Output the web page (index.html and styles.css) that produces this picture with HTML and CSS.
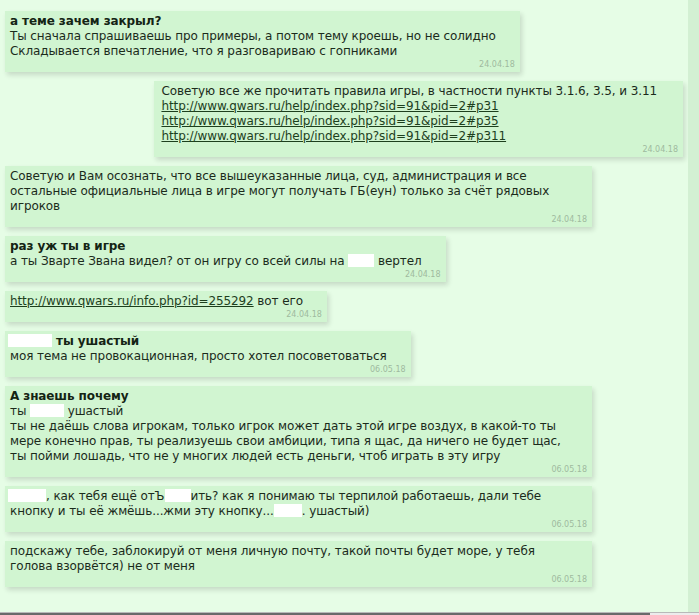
FILE: index.html
```html
<!DOCTYPE html>
<html>
<head>
    <title>Сообщения</title>
    <link rel="stylesheet" href="styles.css">
</head>
<body>
    <div class="page">
        <div class="chat">
            <div class="msg">
                <b>а теме зачем закрыл?</b><br>
                Ты сначала спрашиваешь про примеры, а потом тему кроешь, но не солидно<br>
                Складывается впечатление, что я разговариваю с гопниками
                <div class="date">24.04.18</div>
            </div>

            <div class="msg mine">
                Советую все же прочитать правила игры, в частности пункты 3.1.6, 3.5, и 3.11<br>
                <a href="#">http://www.qwars.ru/help/index.php?sid=91&amp;pid=2#p31</a><br>
                <a href="#">http://www.qwars.ru/help/index.php?sid=91&amp;pid=2#p35</a><br>
                <a href="#">http://www.qwars.ru/help/index.php?sid=91&amp;pid=2#p311</a>
                <div class="date">24.04.18</div>
            </div>

            <div class="msg">
                Советую и Вам осознать, что все вышеуказанные лица, суд, администрация и все остальные официальные лица в игре могут получать ГБ(еун) только за счёт рядовых игроков
                <div class="date">24.04.18</div>
            </div>

            <div class="msg">
                <b>раз уж ты в игре</b><br>
                а ты Зварте Звана видел? от он игру со всей силы на <span class="blot w26"></span> вертел
                <div class="date">24.04.18</div>
            </div>

            <div class="msg">
                <a href="#">http://www.qwars.ru/info.php?id=255292</a> вот его
                <div class="date">24.04.18</div>
            </div>

            <div class="msg">
                <b><span class="blot w44 lead"></span> ты ушастый</b><br>
                моя тема не провокационная, просто хотел посоветоваться
                <div class="date">06.05.18</div>
            </div>

            <div class="msg">
                <b>А знаешь почему</b><br>
                ты <span class="blot w34"></span> ушастый<br>
                ты не даёшь слова игрокам, только игрок может дать этой игре воздух, в какой-то ты мере конечно прав, ты реализуешь свои амбиции, типа я щас, да ничего не будет щас, ты пойми лошадь, что не у многих людей есть деньги, чтоб играть в эту игру
                <div class="date">06.05.18</div>
            </div>

            <div class="msg">
                <span class="blot w38 lead"></span>, как тебя ещё отЪ<span class="blot w26"></span>ить? как я понимаю ты терпилой работаешь, дали тебе кнопку и ты её жмёшь...жми эту кнопку...<span class="blot w28"></span>. ушастый)
                <div class="date">06.05.18</div>
            </div>

            <div class="msg">
                подскажу тебе, заблокируй от меня личную почту, такой почты будет море, у тебя голова взорвётся) не от меня
                <div class="date">06.05.18</div>
            </div>
        </div>
        <div class="rail"></div>
    </div>
    <div class="hscroll"><div class="thumb"></div></div>
</body>
</html>
```
FILE: styles.css
```css
body {
    margin: 0;
    background: #e6fde6;
    font-family: "DejaVu Sans", Verdana, sans-serif;
    font-size: 12px;
    line-height: 15px;
    letter-spacing: -0.1px;
    color: #1b2b1b;
    overflow: hidden;
}
.page {
    display: flex;
    height: 612px;
}
.chat {
    width: 688px;
    display: flex;
    flex-direction: column;
    align-items: flex-start;
    gap: 9px;
    padding-top: 11px;
}
.rail {
    width: 11px;
    background: #d3f0d3;
}
.msg {
    max-width: 558px;
    margin-left: 5px;
    padding: 3px 24px 2px 5px;
    background: #d1f5d1;
    box-shadow: 2px 3px 5px rgba(0,0,0,0.14);
}
.msg.mine {
    align-self: flex-end;
    margin-right: 5px;
    padding-left: 7px;
    padding-right: 26px;
}
.msg b { color: #142414; }
.msg a { color: #1d3f1d; }
.date {
    margin-right: -19px;
    text-align: right;
    font-size: 8px;
    line-height: 11px;
    letter-spacing: 0;
    color: #9fba9f;
}
.mine .date { margin-right: -21px; }
.blot {
    display: inline-block;
    height: 13px;
    vertical-align: -2px;
    background: #fff;
}
.blot.lead { margin-left: -2px; }
.w26 { width: 26px; }
.w28 { width: 28px; }
.w34 { width: 34px; }
.w38 { width: 38px; }
.w44 { width: 44px; }
.hscroll {
    height: 3px;
    border-top: 1px solid #b9b9b9;
    background: #ececec;
}
.thumb {
    width: 650px;
    height: 3px;
    background: #6a6a6a;
}
```
